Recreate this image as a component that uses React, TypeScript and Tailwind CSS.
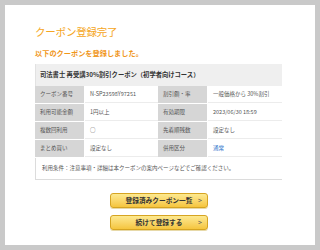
import React from "react";

const font = { fontFamily: '"Noto Sans CJK JP", "Noto Sans", sans-serif' };

type Row = { l1: string; v1: string; l2: string; v2: string; link?: boolean };

const rows: Row[] = [
  { l1: "クーポン番号", v1: "N-SP23598Y97251", l2: "割引額・率", v2: "一般価格から 30%割引" },
  { l1: "利用可能金額", v1: "1円以上", l2: "有効期限", v2: "2023/06/30 18:59" },
  { l1: "複数回利用", v1: "○", l2: "先着順残数", v2: "設定なし" },
  { l1: "まとめ買い", v1: "設定なし", l2: "併用区分", v2: "通常", link: true },
];

function YellowButton({ label }: { label: string }) {
  return (
    <button className="relative w-[98px] h-[15px] rounded-[3px] border border-[#d6a422] bg-gradient-to-b from-[#fde98f] to-[#f5c53c] text-[6.7px] font-bold text-[#333] leading-none flex items-center justify-center shadow-[0_1px_0_#e7d9a8]">
      {label}
      <span className="absolute right-[5px] top-[3px] text-[7px] font-normal text-[#555]">&gt;</span>
    </button>
  );
}

export default function App() {
  return (
    <div className="w-[320px] h-[250px] bg-[#c9c9c9] p-[5px]" style={font}>
      <div className="w-[310px] h-[240px] bg-white pl-[30px] pt-[21px]">
        <h1 className="text-[10.5px] leading-[12px] text-[#f5a623] tracking-[-0.2px]">クーポン登録完了</h1>
        <p className="mt-[10px] text-[7.2px] leading-[10px] font-bold text-[#f0961a]">以下のクーポンを登録しました。</p>

        <div className="mt-[6px] w-[247px] text-[5.5px] text-[#555]">
          <div className="h-[22px] bg-[#efefef] flex items-center pl-[4px] text-[6.3px] font-bold text-[#333] border-l border-[#e2e2e2]">
            司法書士 再受講30%割引クーポン（初学者向けコース）
          </div>
          {rows.map((r) => (
            <div key={r.l1} className="h-[18px] grid grid-cols-[50px_73px_50px_74px] border-b border-white">
              <div className="bg-[#d6d6d6] flex items-center pl-[5px] border-r border-white">{r.l1}</div>
              <div className="bg-white flex items-center pl-[5px] border-b border-[#ececec]">{r.v1}</div>
              <div className="bg-[#d6d6d6] flex items-center pl-[5px] border-r border-white">{r.l2}</div>
              <div className={"bg-white flex items-center pl-[5px] border-b border-[#ececec] " + (r.link ? "text-[#2a6fc9]" : "")}>{r.v2}</div>
            </div>
          ))}
          <div className="h-[22px] flex items-center pl-[6px] border-l border-b border-[#dcdcdc]">
            利用条件：注意事項・詳細は本クーポンの案内ページなどでご確認ください。
          </div>
        </div>

        <div className="mt-[13px] ml-[75px] flex flex-col gap-[7px]">
          <YellowButton label="登録済みクーポン一覧" />
          <YellowButton label="続けて登録する" />
        </div>
      </div>
    </div>
  );
}
